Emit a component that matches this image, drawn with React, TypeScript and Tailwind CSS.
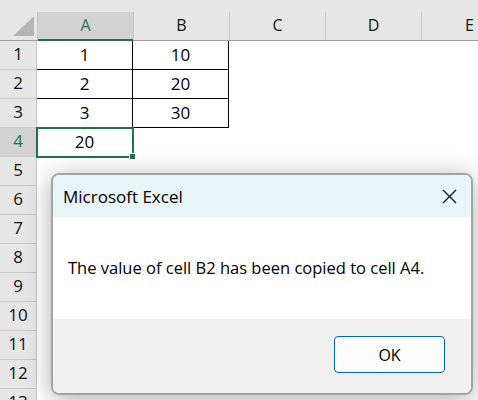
import React from 'react';

const COLS = ['A', 'B', 'C', 'D', 'E'];
const DATA: Record<number, [string, string]> = {
  1: ['1', '10'],
  2: ['2', '20'],
  3: ['3', '30'],
};
const ROWS = [1, 2, 3, 4, 5, 6, 7, 8, 9, 10, 11, 12, 13];

function Sheet() {
  return (
    <div className="bg-white">
      <div className="h-[12px] bg-[#e6e6e6]" />
      {/* column headers */}
      <div className="flex h-[29px] border-b border-[#9f9f9f] bg-[#e6e6e6]">
        <div className="relative w-[37px] shrink-0">
          <svg className="absolute left-[13px] top-[4px]" width="22" height="21" viewBox="0 0 22 21">
            <polygon points="0,20 21,0 21,20" fill="#b4b4b4" />
          </svg>
        </div>
        {COLS.map((c) => (
          <div
            key={c}
            className={`relative flex w-[96px] shrink-0 items-end justify-center border-l border-[#c8c8c8] pb-[3px] text-[16px] ${
              c === 'A' ? 'bg-[#d2d2d2] text-[#217346]' : 'text-[#111]'
            }`}
          >
            {c}
            {c === 'A' && <div className="absolute bottom-[-1px] left-0 right-0 h-[2px] bg-[#217346]" />}
          </div>
        ))}
      </div>
      {ROWS.map((r) => {
        const vals = DATA[r];
        const sel = r === 4;
        return (
          <div key={r} className="flex h-[29px]">
            <div
              className={`flex w-[37px] shrink-0 items-end justify-center border-b border-r border-[#c8c8c8] pb-[3px] text-[17px] ${
                sel ? 'bg-[#d2d2d2] text-[#217346]' : 'bg-[#e6e6e6] text-[#111]'
              }`}
            >
              {r}
            </div>
            {COLS.map((c, i) => {
              const bordered = vals && i < 2;
              const text = vals ? (i < 2 ? vals[i] : '') : sel && i === 0 ? '20' : '';
              return (
                <div
                  key={c}
                  className={`relative flex w-[96px] shrink-0 items-end justify-center pb-[2px] text-[17px] text-black ${
                    bordered ? 'border-b border-r border-black' : 'border-b border-r border-transparent'
                  } ${sel && i === 0 ? 'outline-2 -outline-offset-1 outline-[#217346]' : ''}`}
                >
                  {text}
                  {sel && i === 0 && (
                    <div className="absolute bottom-[-4px] right-[-4px] h-[7px] w-[7px] border border-white bg-[#217346]" />
                  )}
                </div>
              );
            })}
          </div>
        );
      })}
    </div>
  );
}

function Dialog() {
  return (
    <div className="absolute left-[51px] top-[173px] flex h-[222px] w-[422px] flex-col overflow-hidden rounded-[8px] border-2 border-[#a3a3a3] shadow-[0_4px_26px_rgba(0,0,0,0.32)]">
      <div className="flex h-[42px] shrink-0 items-center justify-between bg-[#e9f4f7] pl-[10px] pr-[14px]">
        <span className="pt-[2px] text-[17px] text-black">Microsoft Excel</span>
        <svg width="15" height="15" viewBox="0 0 15 15" className="mt-[1px]">
          <path d="M1 1 L14 14 M14 1 L1 14" stroke="#1a1a1a" strokeWidth="1.4" />
        </svg>
      </div>
      <div className="flex h-[102px] shrink-0 items-center bg-white pl-[15px]">
        <span className="text-[16.5px] text-black">The value of cell B2 has been copied to cell A4.</span>
      </div>
      <div className="flex flex-1 items-start justify-end bg-[#f0f0f0] pr-[26px] pt-[17px]">
        <button className="flex h-[37px] w-[111px] items-center justify-center rounded-[4px] border border-[#0067c0] bg-[#fdfdfd] text-[16px] text-black">
          OK
        </button>
      </div>
    </div>
  );
}

export default function App() {
  return (
    <div
      className="relative h-[400px] w-[478px] overflow-hidden bg-white"
      style={{ fontFamily: '"Open Sans", "Noto Sans", sans-serif' }}
    >
      <Sheet />
      <Dialog />
    </div>
  );
}
